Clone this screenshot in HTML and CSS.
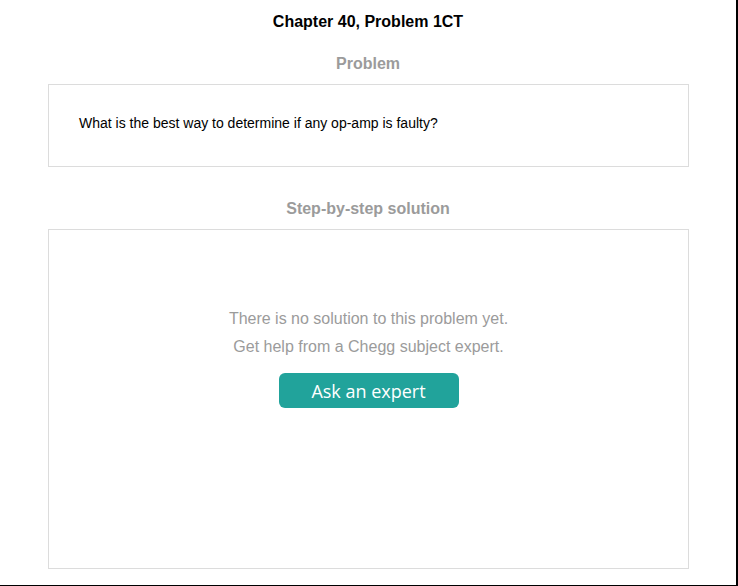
FILE: index.html
```html
<!DOCTYPE html>
<html lang="en">
<head>
<meta charset="utf-8">
<title>Chapter 40, Problem 1CT</title>
<link rel="stylesheet" href="styles.css">
</head>
<body>
<div class="page">
  <h1 class="title">Chapter 40, Problem 1CT</h1>
  <h2 class="section-heading heading-problem">Problem</h2>
  <div class="card problem-card">
    <p class="problem-text">What is the best way to determine if any op-amp is faulty?</p>
  </div>
  <h2 class="section-heading heading-solution">Step-by-step solution</h2>
  <div class="card solution-card">
    <p class="empty-text">There is no solution to this problem yet.</p>
    <p class="empty-text">Get help from a Chegg subject expert.</p>
    <a class="ask-button" href="#">Ask an expert</a>
  </div>
</div>
</body>
</html>
```
FILE: styles.css
```css
html, body {
  margin: 0;
  padding: 0;
  background: #ffffff;
}

.page {
  width: 736px;
  height: 573px;
  border-right: 2px solid #000;
  border-bottom: 1px solid #000;
  font-family: "Liberation Sans", Arial, sans-serif;
  display: flex;
  flex-direction: column;
  align-items: stretch;
  padding-top: 12px;
  box-sizing: content-box;
}

.title {
  margin: 0;
  font-size: 16px;
  line-height: 20px;
  font-weight: bold;
  color: #000;
  text-align: center;
}

.section-heading {
  margin: 0;
  font-size: 16px;
  line-height: 20px;
  font-weight: bold;
  color: #9b9b9b;
  text-align: center;
}

.heading-problem {
  margin-top: 22px;
}

.heading-solution {
  margin-top: 32px;
}

.card {
  margin: 10px 0 0 48px;
  width: 639px;
  border: 1px solid #dcdcdc;
  box-sizing: content-box;
  flex-shrink: 0;
}

.problem-card {
  padding: 28px 30px 33px 30px;
  width: 579px;
}

.problem-text {
  margin: 0;
  font-size: 14px;
  line-height: 20px;
  color: #000;
}

.solution-card {
  height: 263px;
  padding-top: 75px;
  display: flex;
  flex-direction: column;
  align-items: center;
}

.empty-text {
  margin: 0;
  font-size: 16px;
  line-height: 28px;
  color: #9b9b9b;
  text-align: center;
}

.ask-button {
  margin-top: 12px;
  width: 180px;
  height: 35px;
  box-sizing: border-box;
  padding-top: 1px;
  border-radius: 6px;
  background: #21a39b;
  color: #fff;
  text-decoration: none;
  font-family: "Open Sans", "Noto Sans", sans-serif;
  font-size: 18px;
  line-height: 34px;
  text-align: center;
}
```
